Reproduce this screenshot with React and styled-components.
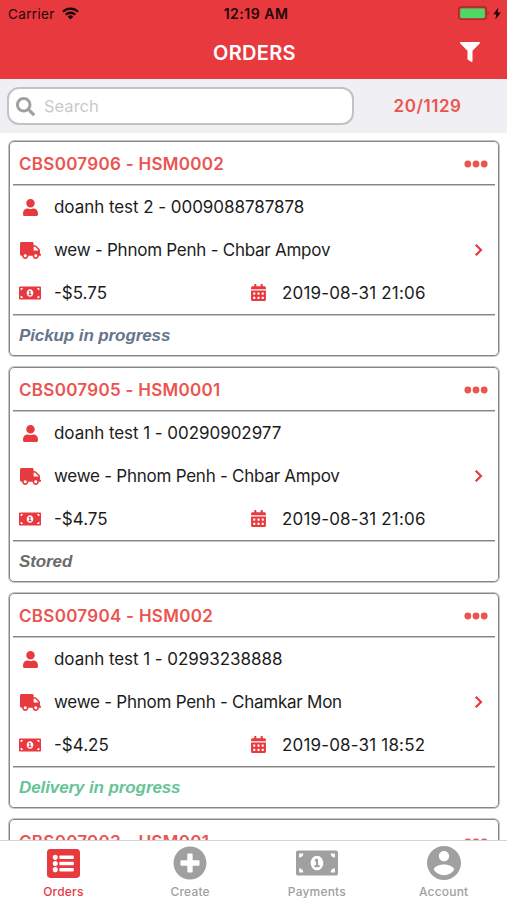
import styled, { createGlobalStyle } from 'styled-components';
import {
  FaCalendarAlt,
  FaFilter,
  FaListAlt,
  FaMoneyBillAlt,
  FaPlusCircle,
  FaSearch,
  FaTruck,
  FaUser,
} from 'react-icons/fa';

const red = '#e8393f';
const line = '#868686';
const softLine = '#c6c6c6';

const orders = [
  {
    code: 'CBS007906 - HSM0002',
    customer: 'doanh test 2 - 0009088787878',
    address: 'wew - Phnom Penh - Chbar Ampov',
    price: '-$5.75',
    date: '2019-08-31 21:06',
    status: 'Pickup in progress',
    color: '#66758c',
  },
  {
    code: 'CBS007905 - HSM0001',
    customer: 'doanh test 1 - 00290902977',
    address: 'wewe - Phnom Penh - Chbar Ampov',
    price: '-$4.75',
    date: '2019-08-31 21:06',
    status: 'Stored',
    color: '#6b6b6b',
  },
  {
    code: 'CBS007904 - HSM002',
    customer: 'doanh test 1 - 02993238888',
    address: 'wewe - Phnom Penh - Chamkar Mon',
    price: '-$4.25',
    date: '2019-08-31 18:52',
    status: 'Delivery in progress',
    color: '#66c496',
  },
  // only the top of this one shows above the tab bar
  { code: 'CBS007903 - HSM001' },
];

const AccountIcon = ({ size }) => (
  <svg width={size} height={size} viewBox="2 2 20 20" fill="currentColor">
    <path d="M12 2C6.48 2 2 6.48 2 12s4.48 10 10 10 10-4.48 10-10S17.52 2 12 2zm0 3c1.66 0 3 1.34 3 3s-1.34 3-3 3-3-1.34-3-3 1.34-3 3-3zm0 14.2c-2.5 0-4.71-1.28-6-3.22.03-1.99 4-3.08 6-3.08 1.99 0 5.97 1.09 6 3.08-1.29 1.94-3.5 3.22-6 3.22z" />
  </svg>
);

const WifiIcon = () => (
  <svg width="17" height="13" viewBox="0 0 17 13" fill="none" stroke="#1d0708" strokeWidth="2.3">
    <path d="M1 4.8a10.6 10.6 0 0 1 15 0" />
    <path d="M3.8 7.7a6.6 6.6 0 0 1 9.4 0" />
    <path d="M8.5 12.4 5.8 9.7a3.8 3.8 0 0 1 5.4 0z" fill="#1d0708" stroke="none" />
  </svg>
);

const BatteryIcon = () => (
  <svg width="44" height="15" viewBox="0 0 44 15">
    <rect x="0.7" y="1" width="27.6" height="12.4" rx="2.6" fill="none" stroke="#96302c" strokeWidth="1.3" />
    <rect x="2.2" y="2.5" width="24.6" height="9.4" rx="1.4" fill="#4cd964" />
    <path d="M29.6 5.3c1.6.4 1.6 3.4 0 3.8z" fill="#96302c" />
    <path d="M40.4 1.6 35.3 8.2h3l-.9 5.2 5.4-7h-3.2z" fill="#1d0708" />
  </svg>
);

const tabs = [
  { label: 'Orders', icon: <FaListAlt size={33} />, active: true },
  { label: 'Create', icon: <FaPlusCircle size={34} /> },
  { label: 'Payments', icon: <FaMoneyBillAlt size={42} /> },
  { label: 'Account', icon: <AccountIcon size={34} /> },
];

function OrderCard({ order }) {
  return (
    <Card>
      <CardHeader>
        <Code>{order.code}</Code>
        <Dots viewBox="0 0 24 8">
          <circle cx="3.8" cy="4" r="3.4" />
          <circle cx="12" cy="4" r="3.4" />
          <circle cx="20.2" cy="4" r="3.4" />
        </Dots>
      </CardHeader>
      {order.customer && (
        <>
          <CardBody>
            <Row>
              <RowIcon><FaUser size={17} /></RowIcon>
              <Text $spacing="-0.05px">{order.customer}</Text>
            </Row>
            <Row>
              <RowIcon><FaTruck size={21} /></RowIcon>
              <Text $spacing="-0.25px">{order.address}</Text>
              <Chevron viewBox="0 0 9 14">
                <path d="M1.7 1.7 7 7l-5.3 5.3" />
              </Chevron>
            </Row>
            <Row>
              <RowIcon><FaMoneyBillAlt size={22} /></RowIcon>
              <Price $spacing="0">{order.price}</Price>
              <DateIcon><FaCalendarAlt size={17} /></DateIcon>
              <Text $spacing="0.17px">{order.date}</Text>
            </Row>
          </CardBody>
          <Status $color={order.color}>{order.status}</Status>
        </>
      )}
    </Card>
  );
}

function App() {
  return (
    <>
      <GlobalStyle />
      <Screen>
        <StatusBar>
          <Carrier>
            Carrier <WifiIcon />
          </Carrier>
          <Clock>12:19 AM</Clock>
          <Battery><BatteryIcon /></Battery>
        </StatusBar>
        <Header>
          <Title>ORDERS</Title>
          <FaFilter size={20} />
        </Header>
        <Toolbar>
          <SearchBox>
            <FaSearch size={19} />
            <Placeholder>Search</Placeholder>
          </SearchBox>
          <Count>20/1129</Count>
        </Toolbar>
        <List>
          {orders.map((order) => (
            <OrderCard key={order.code} order={order} />
          ))}
        </List>
        <TabBar>
          {tabs.map((tab) => (
            <Tab key={tab.label} $active={tab.active}>
              <TabIcon>{tab.icon}</TabIcon>
              <TabLabel>{tab.label}</TabLabel>
            </Tab>
          ))}
        </TabBar>
      </Screen>
    </>
  );
}

const GlobalStyle = createGlobalStyle`
  * {
    box-sizing: border-box;
  }
  body {
    margin: 0;
    overflow: hidden;
    font-family: Inter, "Liberation Sans", sans-serif;
  }
  svg {
    display: block;
    flex: none;
  }
`;

const Screen = styled.main`
  display: flex;
  flex-direction: column;
  width: 507px;
  height: 900px;
  overflow: hidden;
  background: #fff;
`;

const StatusBar = styled.div`
  display: grid;
  grid-template-columns: 1fr auto 1fr;
  align-items: center;
  flex: none;
  height: 27px;
  padding: 0 5px 0 8px;
  background: ${red};
  color: #1d0708;
`;

const Carrier = styled.div`
  display: flex;
  align-items: center;
  gap: 7px;
  font-size: 13.5px;
  letter-spacing: 0.35px;
`;

const Clock = styled.div`
  padding-left: 2px;
  font-size: 14px;
  font-weight: 600;
  letter-spacing: 0.5px;
`;

const Battery = styled.div`
  justify-self: end;
`;

const Header = styled.header`
  display: grid;
  grid-template-columns: 1fr auto 1fr;
  align-items: center;
  flex: none;
  height: 52px;
  padding: 0 27px 2px;
  background: ${red};
  color: #fff;

  > svg {
    grid-column: 3;
    justify-self: end;
  }
`;

const Title = styled.h1`
  grid-column: 2;
  margin: 0;
  padding: 1px 0 0 2px;
  font-size: 20px;
  font-weight: 600;
  letter-spacing: 0.3px;
`;

const Toolbar = styled.div`
  display: flex;
  align-items: center;
  flex: none;
  height: 54px;
  padding: 0 6px 0 7px;
  background: #efeff4;
`;

const SearchBox = styled.div`
  display: flex;
  align-items: center;
  gap: 9px;
  width: 347px;
  height: 38px;
  padding-left: 7px;
  border: 2px solid #c3c3c5;
  border-radius: 12px;
  background: #fff;
  color: #a0a0a0;
`;

const Placeholder = styled.span`
  font-size: 16.5px;
  color: #c9c9cc;
`;

const Count = styled.div`
  flex: 1;
  text-align: center;
  font-size: 17px;
  font-weight: 600;
  letter-spacing: 0.55px;
  color: #ea5550;
`;

const List = styled.div`
  display: flex;
  flex-direction: column;
  gap: 11px;
  flex: 1;
  min-height: 0;
  padding: 8px 8px 0 9px;
  overflow: hidden;
`;

const Card = styled.article`
  flex: none;
  height: 215px;
  padding: 0 3px;
  border: 1px solid ${line};
  border-radius: 5px;
  box-shadow: 0 0 0 1px ${softLine};
`;

const CardHeader = styled.div`
  display: flex;
  align-items: center;
  justify-content: space-between;
  height: 42px;
  padding: 1px 7px 0 6px;
  color: #ea5550;
`;

const Code = styled.div`
  font-size: 17px;
  font-weight: 600;
  letter-spacing: 0.29px;
`;

const Dots = styled.svg`
  width: 24px;
  height: 8px;
  fill: currentColor;
`;

const CardBody = styled.div`
  height: 131px;
  padding-top: 1px;
  border-top: 1px solid ${line};
  border-bottom: 1px solid ${line};
  box-shadow: 0 1px 0 ${softLine}, inset 0 1px 0 ${softLine};
`;

const Row = styled.div`
  display: flex;
  align-items: center;
  height: 42.7px;
  padding: 0 12px 0 6px;
`;

const RowIcon = styled.div`
  display: flex;
  justify-content: center;
  width: 22px;
  margin-right: 13px;
  color: ${red};
`;

const Text = styled.div`
  font-size: 17px;
  letter-spacing: ${(props) => props.$spacing};
  white-space: nowrap;
  color: #1c1c1c;
`;

const Price = styled(Text)`
  width: 196px;
`;

const DateIcon = styled.div`
  width: 32px;
  color: ${red};
`;

const Chevron = styled.svg`
  width: 9px;
  height: 14px;
  margin-left: auto;
  fill: none;
  stroke: ${red};
  stroke-width: 2.2;
`;

const Status = styled.div`
  display: flex;
  align-items: center;
  height: 40px;
  padding: 2px 0 0 6px;
  font-family: "Liberation Sans", Arial, sans-serif;
  font-size: 17px;
  font-style: italic;
  font-weight: 700;
  letter-spacing: -0.1px;
  color: ${(props) => props.$color};
`;

const TabBar = styled.nav`
  display: grid;
  grid-template-columns: repeat(4, 1fr);
  flex: none;
  height: 60px;
  border-top: 1px solid #d5d5d7;
  background: #fff;
`;

const Tab = styled.div`
  display: flex;
  flex-direction: column;
  align-items: center;
  color: ${(props) => (props.$active ? red : '#a0a0a0')};
`;

const TabIcon = styled.div`
  display: flex;
  align-items: center;
  height: 44px;
`;

const TabLabel = styled.div`
  font-size: 12px;
  font-weight: 500;
  line-height: 14px;
  letter-spacing: 0.2px;
`;

export default App;
